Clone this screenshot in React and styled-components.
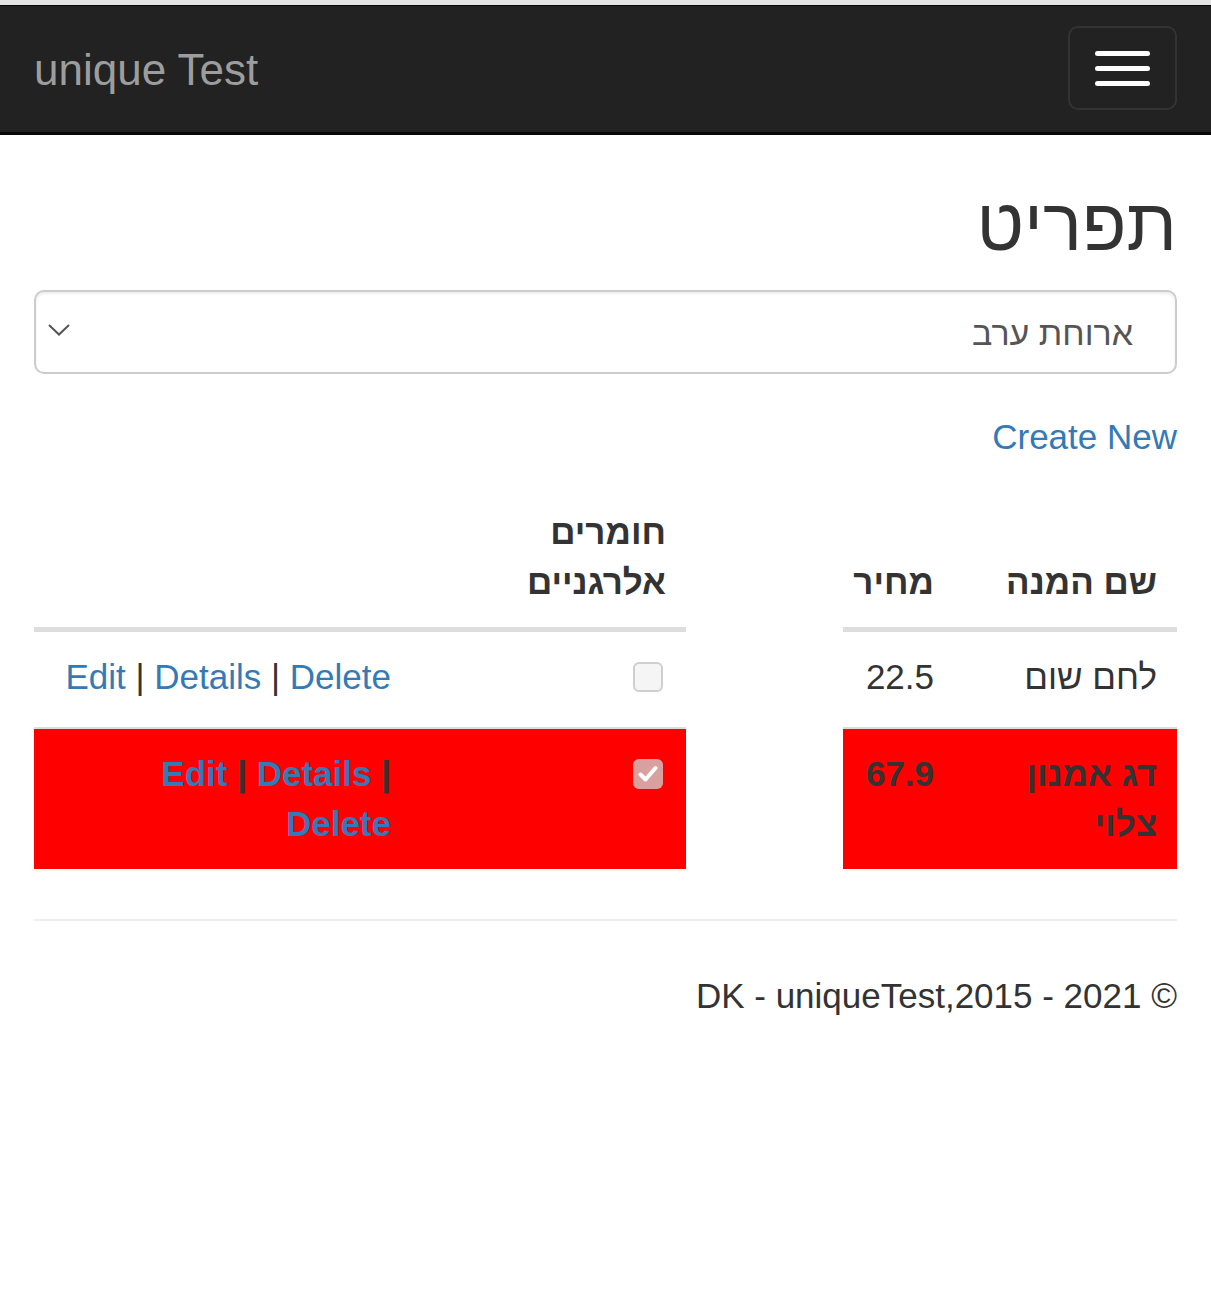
import React from "react"
import styled, { createGlobalStyle } from "styled-components"

const GlobalStyle = createGlobalStyle`
  * {
    box-sizing: border-box;
  }
  body {
    margin: 0;
    background: #fff;
    color: #333;
    font-family: "Liberation Sans", Arial, "DejaVu Sans", sans-serif;
    font-size: 35px;
    line-height: 50px;
  }
`

const dishes = [
  { name: "לחם שום", price: "22.5", allergens: false },
  { name: "דג אמנון צלוי", price: "67.9", allergens: true },
]

export default function App() {
  return (
    <>
      <GlobalStyle />
      <TopStrip />
      <Navbar>
        <Brand>unique Test</Brand>
        <Toggle aria-label="Toggle navigation">
          <Bar />
          <Bar />
          <Bar />
        </Toggle>
      </Navbar>
      <Container>
        <Title>תפריט</Title>
        <SelectBox>
          <span>ארוחת ערב</span>
          <svg width="22" height="12" viewBox="0 0 22 12">
            <path d="M1 1 L11 10.5 L21 1" fill="none" stroke="#555" strokeWidth="2" />
          </svg>
        </SelectBox>
        <CreateLink href="#">Create New</CreateLink>
        <Table>
          <colgroup>
            <col style={{ width: 223 }} />
            <col style={{ width: 111 }} />
            <col style={{ width: 157 }} />
            <col style={{ width: 275 }} />
            <col style={{ width: 377 }} />
          </colgroup>
          <thead>
            <tr>
              <Th>שם המנה</Th>
              <Th>מחיר</Th>
              <Th $gap />
              <Th>חומרים אלרגניים</Th>
              <Th />
            </tr>
          </thead>
          <tbody>
            {dishes.map((d, i) => (
              <tr key={d.name}>
                <Td $hot={d.allergens} $first={i === 0}>{d.name}</Td>
                <Td $hot={d.allergens} $first={i === 0}>{d.price}</Td>
                <Td $gap $first={i === 0} />
                <Td $hot={d.allergens} $first={i === 0}>
                  <Check $checked={d.allergens}>
                    {d.allergens && (
                      <svg width="20" height="18" viewBox="0 0 20 18">
                        <path d="M2.5 9.5 L7.5 14.5 L17.5 3" fill="none" stroke="#fff" strokeWidth="4" strokeLinecap="round" strokeLinejoin="round" />
                      </svg>
                    )}
                  </Check>
                </Td>
                <Td $hot={d.allergens} $first={i === 0}>
                  <Link href="#">Edit</Link> | <Link href="#">Details</Link> | <Link href="#">Delete</Link>
                </Td>
              </tr>
            ))}
          </tbody>
        </Table>
        <Rule />
        <Footer>DK - uniqueTest,2015 - 2021 ©</Footer>
      </Container>
    </>
  )
}

const TopStrip = styled.div`
  height: 5px;
  background: #e4e4e4;
`

const Navbar = styled.nav`
  direction: ltr;
  display: flex;
  align-items: center;
  justify-content: space-between;
  height: 130px;
  padding: 0 34px 0 34px;
  background: #222;
  border-top: 1px solid #080808;
  border-bottom: 3px solid #080808;
`

const Brand = styled.a`
  font-size: 44px;
  line-height: 50px;
  color: #9d9d9d;
  margin-top: 1px;
`

const Toggle = styled.button`
  display: flex;
  flex-direction: column;
  align-items: center;
  justify-content: center;
  gap: 10px;
  width: 109px;
  height: 84px;
  margin-top: -2px;
  padding: 0;
  background: transparent;
  border: 2.5px solid #333;
  border-radius: 10px;
`

const Bar = styled.span`
  display: block;
  width: 55px;
  height: 5px;
  border-radius: 3px;
  background: #fff;
`

const Container = styled.main`
  direction: rtl;
  padding: 0 34px;
`

const Title = styled.h2`
  margin: 49px 0 23px;
  font-size: 73px;
  font-weight: 500;
  line-height: 82.5px;
`

const SelectBox = styled.div`
  display: flex;
  align-items: center;
  justify-content: space-between;
  height: 84px;
  padding: 0 42px 0 12px;
  margin-bottom: 38px;
  color: #555;
  border: 2.5px solid #ccc;
  border-radius: 10px;
  box-shadow: inset 0 2px 3px rgba(0, 0, 0, 0.075);

  span {
    margin-top: 2px;
    font-size: 34px;
  }

  svg {
    margin-top: -4px;
  }
`

const CreateLink = styled.a`
  display: block;
  margin: 0 0 25px;
  color: #337ab7;
  text-decoration: none;
`

const Table = styled.table`
  width: 100%;
  table-layout: fixed;
  border-collapse: collapse;
  border-spacing: 0;
  margin-bottom: 50px;
`

const Th = styled.th`
  padding: 20px;
  text-align: right;
  vertical-align: bottom;
  font-weight: bold;
  border-bottom: ${(p) => (p.$gap ? "none" : "5px solid #ddd")};
`

const Td = styled.td`
  height: ${(p) => (p.$first ? "99px" : "auto")};
  padding: 20px;
  vertical-align: top;
  text-align: right;
  font-weight: ${(p) => (p.$hot ? "bold" : "normal")};
  background: ${(p) => (p.$hot ? "#ff0000" : "#fff")};
  border-top: ${(p) => (p.$gap || p.$first ? "none" : "2.5px solid #ddd")};
`

const Check = styled.span`
  display: inline-flex;
  align-items: center;
  justify-content: center;
  vertical-align: top;
  margin-top: 10px;
  margin-right: 3px;
  width: 30px;
  height: 30px;
  border-radius: 6px;
  background: ${(p) => (p.$checked ? "#d9a0a0" : "#f5f5f5")};
  border: ${(p) => (p.$checked ? "none" : "2.5px solid #cfcfcf")};
`

const Link = styled.a`
  color: #337ab7;
  text-decoration: none;
`

const Rule = styled.hr`
  margin: 0 0 50px;
  border: 0;
  border-top: 2.5px solid #eee;
`

const Footer = styled.p`
  direction: ltr;
  text-align: right;
  margin: 0;
`
